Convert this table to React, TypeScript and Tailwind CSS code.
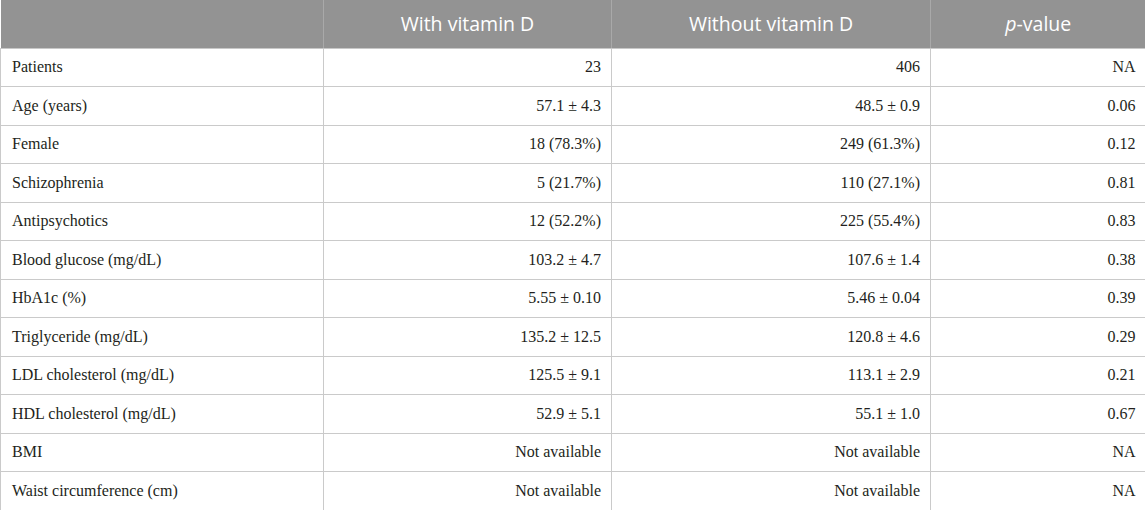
import React from 'react';

type Row = { label: string; withD: string; withoutD: string; p: string };

const rows: Row[] = [
  { label: 'Patients', withD: '23', withoutD: '406', p: 'NA' },
  { label: 'Age (years)', withD: '57.1 ± 4.3', withoutD: '48.5 ± 0.9', p: '0.06' },
  { label: 'Female', withD: '18 (78.3%)', withoutD: '249 (61.3%)', p: '0.12' },
  { label: 'Schizophrenia', withD: '5 (21.7%)', withoutD: '110 (27.1%)', p: '0.81' },
  { label: 'Antipsychotics', withD: '12 (52.2%)', withoutD: '225 (55.4%)', p: '0.83' },
  { label: 'Blood glucose (mg/dL)', withD: '103.2 ± 4.7', withoutD: '107.6 ± 1.4', p: '0.38' },
  { label: 'HbA1c (%)', withD: '5.55 ± 0.10', withoutD: '5.46 ± 0.04', p: '0.39' },
  { label: 'Triglyceride (mg/dL)', withD: '135.2 ± 12.5', withoutD: '120.8 ± 4.6', p: '0.29' },
  { label: 'LDL cholesterol (mg/dL)', withD: '125.5 ± 9.1', withoutD: '113.1 ± 2.9', p: '0.21' },
  { label: 'HDL cholesterol (mg/dL)', withD: '52.9 ± 5.1', withoutD: '55.1 ± 1.0', p: '0.67' },
  { label: 'BMI', withD: 'Not available', withoutD: 'Not available', p: 'NA' },
  { label: 'Waist circumference (cm)', withD: 'Not available', withoutD: 'Not available', p: 'NA' },
];

const App = () => {
  return (
    <div className="w-[1145px] h-[510px] bg-white overflow-hidden">
      <table className="w-[1145px] table-fixed border-collapse">
        <colgroup>
          <col className="w-[323px]" />
          <col className="w-[288px]" />
          <col className="w-[319px]" />
          <col className="w-[215px]" />
        </colgroup>
        <thead>
          <tr className="h-[48px] bg-[#939393] text-white text-[19.5px] font-['Open_Sans',sans-serif]">
            <th className="border-r border-b border-[#a9a9a9] border-b-[#c8c8c8] font-normal"></th>
            <th className="border-r border-b border-[#a9a9a9] border-b-[#c8c8c8] font-normal text-center">With vitamin D</th>
            <th className="border-r border-b border-[#a9a9a9] border-b-[#c8c8c8] font-normal text-center">Without vitamin D</th>
            <th className="border-b border-b-[#c8c8c8] font-normal text-center">
              <i>p</i>-value
            </th>
          </tr>
        </thead>
        <tbody className="font-['Liberation_Serif',serif] text-[16px] text-[#231f20]">
          {rows.map((r) => (
            <tr key={r.label} className="h-[38.5px]">
              <td className="border-l border-r border-b border-[#cacaca] pl-[11px] pr-[10px]">{r.label}</td>
              <td className="border-r border-b border-[#cacaca] px-[10px] text-right">{r.withD}</td>
              <td className="border-r border-b border-[#cacaca] px-[10px] text-right">{r.withoutD}</td>
              <td className="border-b border-[#cacaca] px-[10px] text-right">{r.p}</td>
            </tr>
          ))}
        </tbody>
      </table>
    </div>
  );
};

export default App;
